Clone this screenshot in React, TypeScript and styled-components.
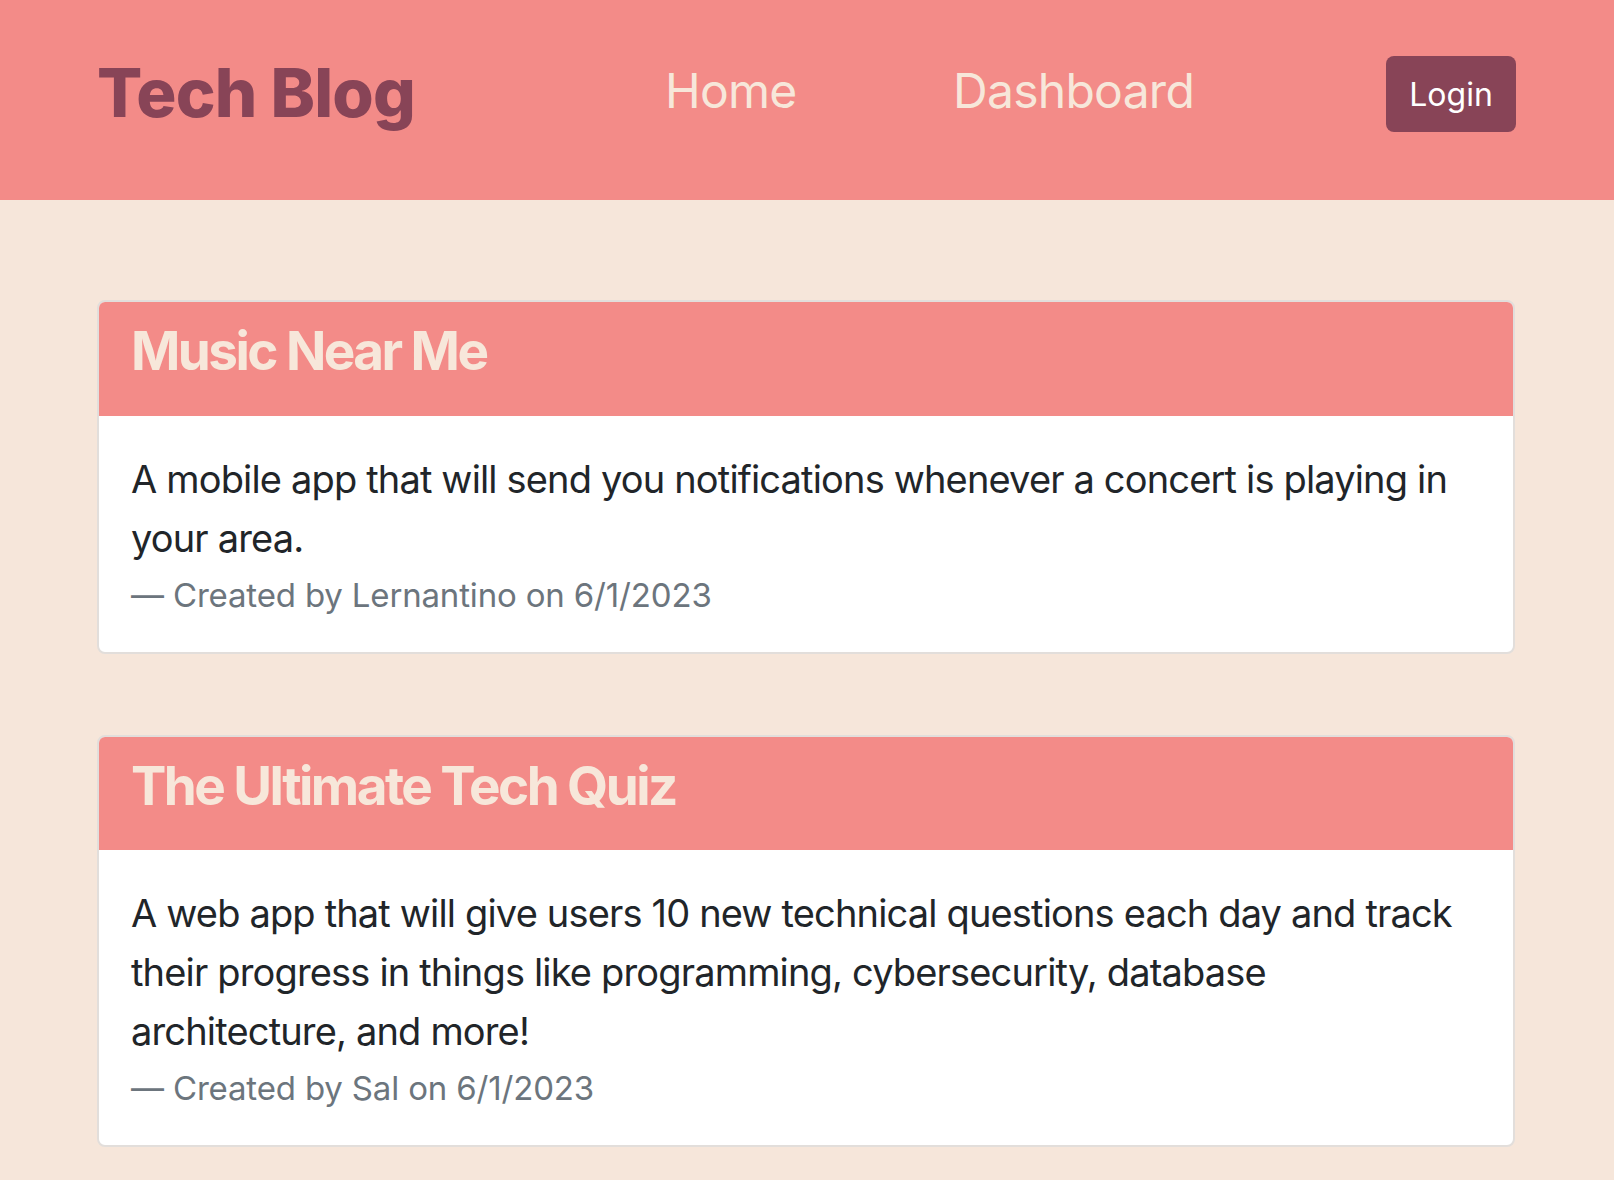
import React from "react";
import styled, { createGlobalStyle } from "styled-components";

const GlobalStyle = createGlobalStyle`
  html, body {
    margin: 0;
    padding: 0;
    background: #f6e6da;
    font-family: Inter, "Noto Sans", "Liberation Sans", sans-serif;
  }
  * { box-sizing: border-box; }
`;

interface Post {
  id: number;
  title: string;
  body: string;
  author: string;
  date: string;
}

const posts: Post[] = [
  {
    id: 1,
    title: "Music Near Me",
    body: "A mobile app that will send you notifications whenever a concert is playing in your area.",
    author: "Lernantino",
    date: "6/1/2023",
  },
  {
    id: 2,
    title: "The Ultimate Tech Quiz",
    body: "A web app that will give users 10 new technical questions each day and track their progress in things like programming, cybersecurity, database architecture, and more!",
    author: "Sal",
    date: "6/1/2023",
  },
];

const App: React.FC = () => {
  return (
    <>
      <GlobalStyle />
      <Header>
        <HeaderInner>
          <Brand>Tech Blog</Brand>
          <NavLink href="#">Home</NavLink>
          <NavLink href="#">Dashboard</NavLink>
          <LoginButton type="button">Login</LoginButton>
        </HeaderInner>
      </Header>
      <Main>
        {posts.map((post) => (
          <Card key={post.id}>
            <CardHeader>
              <CardTitle>{post.title}</CardTitle>
            </CardHeader>
            <CardBody>
              <PostText>{post.body}</PostText>
              <PostFooter>
                — Created by {post.author} on {post.date}
              </PostFooter>
            </CardBody>
          </Card>
        ))}
      </Main>
    </>
  );
};

const Header = styled.header`
  background: #f38b88;
  height: 200px;
  padding: 0 98px 0 97px;
`;

/* columns put Home and Dashboard where the original nav sits */
const HeaderInner = styled.div`
  height: 100%;
  display: grid;
  grid-template-columns: 568px 288px 1fr auto;
  align-items: center;
`;

const Brand = styled.h1`
  margin: 0 0 14px;
  font-size: 67px;
  font-weight: 800;
  letter-spacing: -0.012em;
  color: #884457;
  line-height: 1.2;
`;

const NavLink = styled.a`
  font-size: 48px;
  color: #f7e7da;
  text-decoration: none;
  line-height: 1.2;
  letter-spacing: -0.015em;
  margin-bottom: 18px;
`;

const LoginButton = styled.button`
  width: 130px;
  height: 76px;
  margin-bottom: 12px;
  border: none;
  border-radius: 8px;
  background: #884457;
  color: #ffffff;
  font-family: inherit;
  font-size: 32px;
  cursor: pointer;
`;

const Main = styled.main`
  padding: 100px 99px 40px 97px;
  display: flex;
  flex-direction: column;
  gap: 81px;
`;

const Card = styled.article`
  background: #ffffff;
  border: 2px solid #e2dedb;
  border-radius: 8px;
  overflow: hidden;
`;

const CardHeader = styled.div`
  background: #f38b88;
  margin: -2px -2px 0;
  padding: 20px 32px 32px 34px;
`;

const CardTitle = styled.h2`
  margin: 0;
  font-size: 53px;
  font-weight: 700;
  line-height: 1.2;
  letter-spacing: -0.048em;
  color: #f7e7da;
`;

const CardBody = styled.div`
  padding: 34px 32px 31px;
`;

const PostText = styled.p`
  margin: 0 0 2px;
  font-size: 38px;
  line-height: 59px;
  letter-spacing: -0.022em;
  color: #212529;
`;

const PostFooter = styled.div`
  font-size: 33px;
  line-height: 51px;
  letter-spacing: -0.005em;
  color: #6c757d;
`;

export default App;
